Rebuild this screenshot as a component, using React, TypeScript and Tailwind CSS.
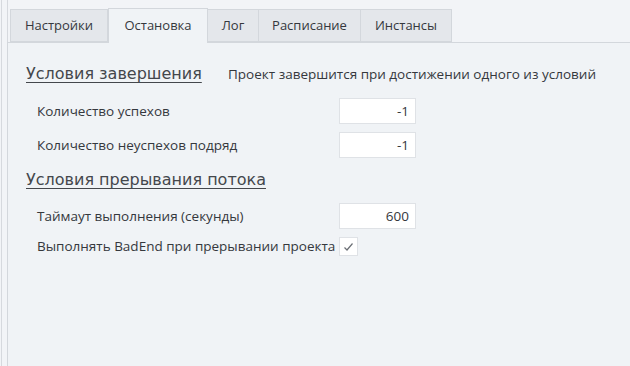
import {useState} from "react";

const tabs = [
    {name: "Настройки", w: "w-[98px]"},
    {name: "Остановка", w: "w-[100px]"},
    {name: "Лог", w: "w-[52px]"},
    {name: "Расписание", w: "w-[103px]"},
    {name: "Инстансы", w: "w-[92px]"},
];

type FieldRowProps = {
    label: string
    value: string
}

const FieldRow = ({label, value}: FieldRowProps) => (
    <div className="flex items-center h-[26px]">
        <span className="w-[331px] pl-[29px]">{label}</span>
        <div className="w-[77px] h-[26px] bg-white border border-[#dfe2e6] flex items-center justify-end pr-[6px]">
            {value}
        </div>
    </div>
);

const App = () => {
    const [active, setActive] = useState(1);
    const [badEnd, setBadEnd] = useState(true);

    return (
        <div className="w-[630px] h-[366px] bg-[#f2f4f7] pl-[1px] text-[13.5px] text-[#35383d]"
             style={{fontFamily: '"Open Sans", "Noto Sans", sans-serif'}}>
            <div className="h-full border-l border-[#d6d9de] pl-[6px] flex flex-col">
                <div className="flex items-end h-[42px] pl-[2px] border-l border-[#d6d9de] -ml-px text-[13px]">
                    {tabs.map((tab, index) => (
                        <button key={index}
                                onClick={() => setActive(index)}
                                className={index === active
                                    ? `${tab.w} h-[35px] bg-[#f0f3f6] border border-b-0 border-[#d3d7dc] -mb-px relative z-10 flex items-center justify-center`
                                    : `${tab.w} h-[33px] bg-[#e4e7eb] border border-[#d3d7dc] -ml-px first:ml-0 flex items-center justify-center`}>
                            {tab.name}
                        </button>
                    ))}
                </div>
                <div className="flex-1 bg-[#f0f3f6] border-t border-l border-[#d3d7dc] -ml-px">
                    <div className="flex items-center mt-[20px] h-[22px] pl-[18px]">
                        <span className="w-[202px] text-[16px] text-[#44474c] underline underline-offset-[3px]"
                              style={{fontFamily: '"DejaVu Sans", sans-serif'}}>
                            Условия завершения
                        </span>
                        <span>Проект завершится при достижении одного из условий</span>
                    </div>
                    <div className="flex flex-col gap-[8px] mt-[13px]">
                        <FieldRow label="Количество успехов" value="-1"/>
                        <FieldRow label="Количество неуспехов подряд" value="-1"/>
                    </div>
                    <div className="flex items-center mt-[11px] h-[22px] pl-[18px]">
                        <span className="text-[16px] text-[#44474c] underline underline-offset-[3px]"
                              style={{fontFamily: '"DejaVu Sans", sans-serif'}}>
                            Условия прерывания потока
                        </span>
                    </div>
                    <div className="mt-[12px]">
                        <FieldRow label="Таймаут выполнения (секунды)" value="600"/>
                    </div>
                    <div className="flex items-center h-[19px] mt-[8px]">
                        <span className="w-[331px] pl-[29px] whitespace-nowrap">Выполнять BadEnd при прерывании проекта</span>
                        <button onClick={() => setBadEnd(!badEnd)}
                                className="w-[19px] h-[19px] bg-white border border-[#dfe2e6] flex items-center justify-center">
                            {badEnd && (
                                <svg width="11" height="10" viewBox="0 0 11 10" fill="none">
                                    <path d="M1.5 5.5 L4 8 L9.5 1.5" stroke="#6b6f75" strokeWidth="1.2"/>
                                </svg>
                            )}
                        </button>
                    </div>
                </div>
            </div>
        </div>
    );
}

export default App;
